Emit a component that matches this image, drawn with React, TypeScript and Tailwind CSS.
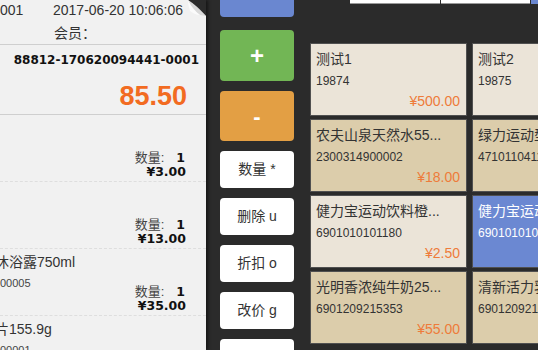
import React from "react";

const items = [
  { name: "", code: "", qty: 1, price: "3.00" },
  { name: "", code: "", qty: 1, price: "13.00" },
  { name: "沐浴露750ml", code: "00005", qty: 1, price: "35.00" },
  { name: "片155.9g", code: "00001", qty: 1, price: "" },
];

const rows = [
  [
    { name: "测试1", code: "19874", price: "500.00", tone: "light" },
    { name: "测试2", code: "19875", price: "", tone: "light" },
  ],
  [
    { name: "农夫山泉天然水55...", code: "2300314900002", price: "18.00", tone: "tan" },
    { name: "绿力运动型饮料", code: "4710110411", price: "", tone: "tan" },
  ],
  [
    { name: "健力宝运动饮料橙...", code: "6901010101180", price: "2.50", tone: "light" },
    { name: "健力宝运动饮料", code: "6901010102", price: "", tone: "blue" },
  ],
  [
    { name: "光明香浓纯牛奶25...", code: "6901209215353", price: "55.00", tone: "tan" },
    { name: "清新活力乳酸", code: "6901209216", price: "", tone: "tan" },
  ],
];

const toneClass: Record<string, string> = {
  light: "bg-[#ebe4d8] text-[#333]",
  tan: "bg-[#dccdab] text-[#333]",
  blue: "bg-[#6b88d2] text-white",
};

function Receipt() {
  return (
    <div className="relative w-[206px] h-full shrink-0 bg-[#f1f1f1] text-[#333] shadow-[2px_0_3px_rgba(0,0,0,0.5)]">
      {/* folded corner */}
      <svg className="absolute right-0 top-0" width="18" height="16" viewBox="0 0 18 16">
        <path d="M0 0 L18 0 L18 16 Z" fill="#2b2b2b" />
        <path d="M0 0 C6 4 11 8 18 16 L12 15 C8 12 3 7 0 0 Z" fill="#d9d9d9" />
        <path d="M0 0 C3 7 8 12 12 15 C8 15 5 13 2 11 C1 7 0 4 0 0 Z" fill="#fbfbfb" />
      </svg>

      {/* header */}
      <div className="h-[45px] border-b border-[#cfcfcf] pt-[2px] text-[14px] leading-[16px]">
        <div className="flex">
          <span className="w-[53px]">001</span>
          <span>2017-06-20 10:06:06</span>
        </div>
        <div className="mt-[7px] pl-[54px]">会员：</div>
      </div>

      {/* order */}
      <div className="h-[70px] border-b border-[#cfcfcf] pt-[7px] pr-[7px] flex flex-col items-end">
        <div className="font-['DejaVu_Sans',sans-serif] font-bold text-[12px] leading-[16px] text-[#111]">
          88812-170620094441-0001
        </div>
        <div className="mt-[13px] pr-[12px] font-bold text-[27px] leading-[30px] text-[#f26b21]">85.50</div>
      </div>

      {/* items */}
      {items.map((it, i) => (
        <div key={i} className="h-[67px] flex justify-between border-b border-dashed border-[#dedede]">
          <div className="pt-[4px]">
            <div className="-ml-[5px] h-[18px] text-[14px] leading-[18px] whitespace-nowrap">{it.name}</div>
            <div className="mt-[5px] text-[11px] leading-[14px] text-[#444]">{it.code}</div>
          </div>
          <div className="pt-[36px] pr-[20px] flex flex-col items-end">
            <div className="pr-[1px] flex items-center text-[13px] leading-[14px]">
              <span className="text-[#444]">数量:</span>
              <span className="ml-[12px] font-['DejaVu_Sans',sans-serif] font-bold text-[12.5px] text-[#111]">{it.qty}</span>
            </div>
            {it.price && (
              <div className="font-['DejaVu_Sans',sans-serif] font-bold text-[12.5px] leading-[14px] text-[#111]">
                ¥{it.price}
              </div>
            )}
          </div>
        </div>
      ))}
    </div>
  );
}

function Keypad() {
  const btn = "flex shrink-0 items-center justify-center rounded-[4px]";
  return (
    <div className="ml-[14px] w-[74px] shrink-0 flex flex-col">
      <div className={`${btn} h-[17px] rounded-t-none bg-[#6a87d0]`} />
      <div className={`${btn} mt-[13px] h-[51px] bg-[#72b655] text-white text-[24px] font-bold`}>+</div>
      <div className={`${btn} mt-[10px] h-[50px] bg-[#e39f44] text-white text-[22px] font-bold`}>-</div>
      {["数量 *", "删除 u", "折扣 o", "改价 g", ""].map((t, i) => (
        <div key={i} className={`${btn} mt-[10px] h-[37px] bg-white text-[#333] text-[14px]`}>
          {t}
        </div>
      ))}
    </div>
  );
}

function Products() {
  return (
    <div className="ml-[16px] flex-1 min-w-0">
      <div className="ml-[40px] flex h-[4px]">
        <div className="w-[90px] bg-white border-b border-[#999]" />
        <div className="ml-px w-[89px] bg-white border-b border-[#999]" />
        <div className="ml-px flex-1 bg-[#6a87d0]" />
      </div>
      <div className="mt-[39px] flex flex-col gap-[3px]">
        {rows.map((row, r) => (
          <div key={r} className="flex gap-[5px]">
            {row.map((p, c) => (
              <div
                key={c}
                className={`w-[157px] h-[73px] shrink-0 border border-[#505050] pl-[5px] pr-[6px] pt-[5px] ${toneClass[p.tone]}`}
              >
                <div className="text-[14px] leading-[20px] whitespace-nowrap">{p.name}</div>
                <div className="mt-[4px] text-[12px] leading-[16px] whitespace-nowrap">{p.code}</div>
                {p.price && (
                  <div className="mt-[4px] text-right text-[14px] leading-[16px] text-[#ee7b3a]">¥{p.price}</div>
                )}
              </div>
            ))}
          </div>
        ))}
      </div>
    </div>
  );
}

export default function App() {
  return (
    <div className="w-[538px] h-[350px] overflow-hidden flex bg-[#2b2b2b] font-['Liberation_Sans','Noto_Sans_CJK_SC',sans-serif]">
      <Receipt />
      <Keypad />
      <Products />
    </div>
  );
}
